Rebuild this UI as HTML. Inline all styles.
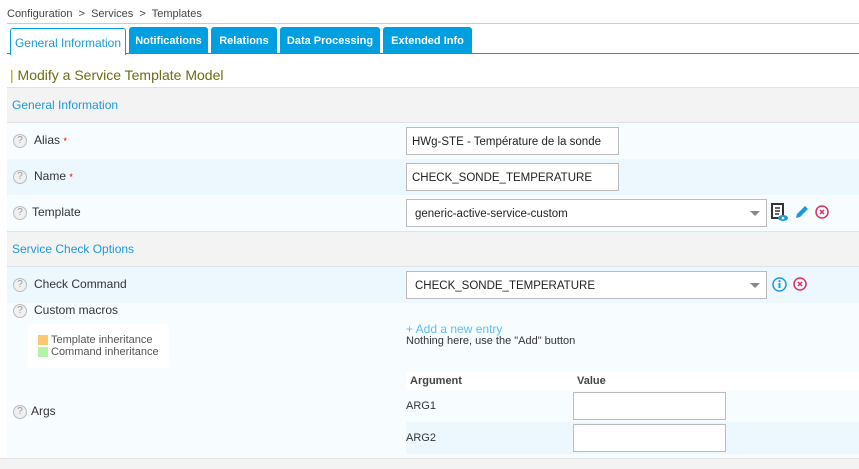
<!DOCTYPE html>
<html><head><meta charset="utf-8"><style>
*{box-sizing:border-box;margin:0;padding:0}
body{width:859px;height:469px;background:#fff;font-family:"Liberation Sans",Arial,sans-serif;font-size:12px;color:#333;position:relative;overflow:hidden}
.a{position:absolute}
.tab{position:absolute;top:27px;height:27px;background:#009fdf;color:#fff;font-weight:bold;font-size:11px;line-height:29px;text-align:center;border-radius:3px 3px 0 0}
.q{position:absolute;width:14px;height:14px;border:1px solid #bbb;border-radius:50%;background:#f0f0f0;color:#999;font-size:10px;line-height:12px;text-align:center}
.lbl{position:absolute;font-size:12px;color:#333}
.inp{position:absolute;background:#fff;border:1px solid #bbb;font-size:11.5px;color:#222;padding-left:5px;line-height:29px}
.sel::after{content:"";position:absolute;right:6px;top:11px;border-left:5px solid transparent;border-right:5px solid transparent;border-top:5px solid #888}
.st{color:#d00;font-size:9px}
</style></head><body>
<div class="a" style="left:7px;top:8px;font-size:11px;color:#444">Configuration &nbsp;&gt;&nbsp; Services &nbsp;&gt;&nbsp; Templates</div>
<div class="a" style="left:7px;top:23px;width:852px;height:1px;background:#ccc"></div>
<div class="a" style="left:7px;top:53px;width:852px;height:1px;background:#009fdf"></div>
<div class="tab" style="left:10px;width:116px;background:#fff;color:#1a9ad6;font-weight:normal;font-size:12px;border:1px solid #009fdf;border-bottom:none;height:27px;top:28px">General Information</div>
<div class="tab" style="left:129px;width:79px">Notifications</div>
<div class="tab" style="left:211px;width:66px">Relations</div>
<div class="tab" style="left:280px;width:100px">Data Processing</div>
<div class="tab" style="left:383px;width:89px">Extended Info</div>
<div class="a" style="left:10px;top:67px;font-size:14px;color:#6d6d14"><span style="color:#b0a000">|</span> Modify a Service Template Model</div>
<div class="a" style="left:7px;top:87px;width:852px;height:36px;background:#f3f3f3;border-top:1px solid #e2e2e2;border-bottom:1px solid #e2e2e2"></div>
<div class="a" style="left:12px;top:98px;color:#1a9ad6">General Information</div>
<div class="a" style="left:7px;top:123px;width:852px;height:36px;background:#f7fcff"></div>
<div class="a" style="left:7px;top:159px;width:852px;height:36px;background:#edf8fe"></div>
<div class="a" style="left:7px;top:195px;width:852px;height:36px;background:#f7fcff"></div>
<div class="a" style="left:7px;top:231px;width:852px;height:36px;background:#f3f3f3;border-top:1px solid #e2e2e2;border-bottom:1px solid #e2e2e2"></div>
<div class="a" style="left:12px;top:242px;color:#1a9ad6">Service Check Options</div>
<div class="a" style="left:7px;top:267px;width:852px;height:36px;background:#edf8fe"></div>
<div class="a" style="left:7px;top:303px;width:852px;height:156px;background:#f7fcff"></div>
<div class="a" style="left:0;top:458px;width:859px;height:11px;background:#f3f3f3;border-top:1px solid #e2e2e2"></div>

<div class="q" style="left:13px;top:134px">?</div><div class="lbl" style="left:34px;top:133px">Alias <span class="st">*</span></div>
<div class="q" style="left:13px;top:170px">?</div><div class="lbl" style="left:34px;top:169px">Name <span class="st">*</span></div>
<div class="q" style="left:13px;top:206px">?</div><div class="lbl" style="left:32px;top:205px">Template</div>
<div class="q" style="left:13px;top:278px">?</div><div class="lbl" style="left:34px;top:277px">Check Command</div>
<div class="q" style="left:13px;top:304px">?</div><div class="lbl" style="left:34px;top:303px">Custom macros</div>
<div class="q" style="left:13px;top:405px">?</div><div class="lbl" style="left:31px;top:404px">Args</div>

<div class="a" style="left:28px;top:324px;width:141px;height:44px;background:#fff;border-radius:4px"></div>
<div class="a" style="left:38px;top:335px;width:10px;height:10px;background:#ffc870"></div>
<div class="a" style="left:38px;top:347px;width:10px;height:10px;background:#b4f3a8"></div>
<div class="a" style="left:51px;top:334px;font-size:11px;color:#555;line-height:12px">Template inheritance<br>Command inheritance</div>

<div class="inp" style="left:406px;top:127px;width:213px;height:28px">HWg-STE - Température de la sonde</div>
<div class="inp" style="left:406px;top:163px;width:213px;height:28px">CHECK_SONDE_TEMPERATURE</div>
<div class="inp sel" style="left:406px;top:199px;width:361px;height:28px;padding-left:8px">generic-active-service-custom</div>
<div class="inp sel" style="left:406px;top:271px;width:361px;height:28px;padding-left:8px">CHECK_SONDE_TEMPERATURE</div>

<svg class="a" style="left:771px;top:203px" width="18" height="20" viewBox="0 0 18 20"><rect x="1" y="1" width="11" height="14" fill="#fff" stroke="#333" stroke-width="2"/><path d="M4 5h5M4 8h5M4 11h4" stroke="#333" stroke-width="1.5"/><ellipse cx="12" cy="15" rx="5" ry="3" fill="#1a9ad6"/><circle cx="12" cy="15" r="1.3" fill="#fff"/></svg>
<svg class="a" style="left:794px;top:204px" width="15" height="16" viewBox="0 0 15 16"><path d="M2 14l1-4 8-8 3 3-8 8z" fill="#1a9ad6"/></svg>
<svg class="a" style="left:815px;top:205px" width="14" height="14" viewBox="0 0 14 14"><circle cx="7" cy="7" r="6" fill="none" stroke="#e0305a" stroke-width="1.5"/><path d="M5 5l4 4M9 5l-4 4" stroke="#e0305a" stroke-width="1.5"/></svg>
<svg class="a" style="left:772px;top:277px" width="15" height="15" viewBox="0 0 15 15"><circle cx="7.5" cy="7.5" r="6.5" fill="none" stroke="#1a9ad6" stroke-width="1.5"/><rect x="6.5" y="6" width="2" height="5" fill="#1a9ad6"/><circle cx="7.5" cy="4.2" r="1.1" fill="#1a9ad6"/></svg>
<svg class="a" style="left:793px;top:277px" width="14" height="14" viewBox="0 0 14 14"><circle cx="7" cy="7" r="6" fill="none" stroke="#e0305a" stroke-width="1.5"/><path d="M5 5l4 4M9 5l-4 4" stroke="#e0305a" stroke-width="1.5"/></svg>

<div class="a" style="left:406px;top:322px;color:#5bc0f0;font-size:12px">+ Add a new entry</div>
<div class="a" style="left:406px;top:335px;color:#333;font-size:11px">Nothing here, use the "Add" button</div>

<div class="a" style="left:406px;top:372px;width:453px;height:18px;background:#fff"></div>
<div class="a" style="left:410px;top:375px;font-weight:bold;font-size:11px;color:#444">Argument</div>
<div class="a" style="left:577px;top:375px;font-weight:bold;font-size:11px;color:#444">Value</div>
<div class="a" style="left:406px;top:422px;width:453px;height:32px;background:#edf8fe"></div>
<div class="a" style="left:406px;top:400px;font-size:11px">ARG1</div>
<div class="a" style="left:406px;top:432px;font-size:11px">ARG2</div>
<div class="inp" style="left:573px;top:392px;width:153px;height:28px"></div>
<div class="inp" style="left:573px;top:424px;width:153px;height:28px"></div>
</body></html>
